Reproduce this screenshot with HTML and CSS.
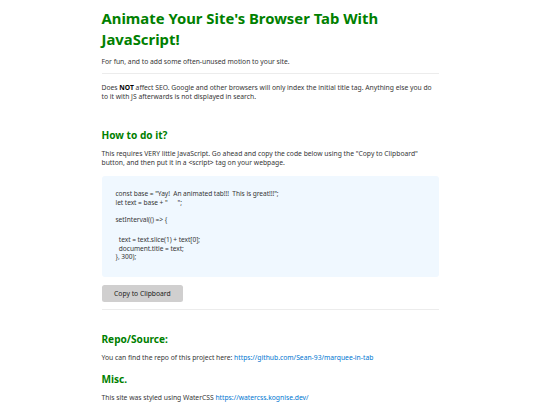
FILE: index.html
```html
<!DOCTYPE html>
<html lang="en">
<head>
<meta charset="utf-8">
<title>Animate Your Site's Browser Tab With JavaScript!</title>
<link rel="stylesheet" href="styles.css">
</head>
<body>
<main class="page">
  <h1 class="title">Animate Your Site's Browser Tab With JavaScript!</h1>
  <p class="text">For fun, and to add some often-unused motion to your site.</p>
  <hr class="rule rule-top">
  <p class="text text-note">Does <strong>NOT</strong> affect SEO. Google and other browsers will only index the initial title tag. Anything else you do to it with JS afterwards is not displayed in search.</p>

  <h2 class="section section-how">How to do it?</h2>
  <p class="text">This requires VERY little JavaScript. Go ahead and copy the code below using the "Copy to Clipboard" button, and then put it in a &lt;script&gt; tag on your webpage.</p>
  <div class="code-box">
    <div class="code-line">const base = "Yay!&nbsp; An animated tab!!!&nbsp; This is great!!!";</div>
    <div class="code-line">let text = base + "&nbsp;&nbsp;&nbsp;&nbsp;&nbsp; ";</div>
    <div class="code-line code-blank">&nbsp;</div>
    <div class="code-line">setInterval(() =&gt; {</div>
    <div class="code-line code-blank code-gap">&nbsp;</div>
    <div class="code-line">&nbsp; text = text.slice(1) + text[0];</div>
    <div class="code-line">&nbsp; document.title = text;</div>
    <div class="code-line">}, 300);</div>
  </div>
  <div class="actions">
    <button class="copy-btn" type="button">Copy to Clipboard</button>
  </div>
  <hr class="rule rule-bottom">

  <h2 class="section section-repo">Repo/Source:</h2>
  <p class="text">You can find the repo of this project here: <a class="link" href="#">https://github.com/Sean-93/marquee-in-tab</a></p>
  <h2 class="section section-misc">Misc.</h2>
  <p class="text">This site was styled using WaterCSS <a class="link" href="#">https://watercss.kognise.dev/</a></p>
</main>
</body>
</html>
```

FILE: styles.css
```css
html, body {
  margin: 0;
  padding: 0;
  background: #ffffff;
}

body {
  font-family: "Noto Sans", "Open Sans", sans-serif;
  color: #363636;
  font-size: 6.75px;
  line-height: 1.4;
}

.page {
  width: 337.5px;
  margin: 0 auto;
  padding: 8.4px 0 0 0.5px;
}

.title {
  margin: 0;
  font-size: 14.85px;
  line-height: 20.8px;
  font-weight: 700;
  color: #008000;
}

.text {
  margin: 6.75px 0;
}

.text strong {
  font-weight: 700;
  color: #000;
}

.rule {
  border: none;
  border-top: 1px solid #ececec;
  height: 0;
  margin: 6.75px 0;
}

.rule-top {
  margin-bottom: 9px;
}

.section {
  margin: 0;
  font-size: 10.1px;
  line-height: 14.2px;
  font-weight: 700;
  color: #008000;
}

.section-how {
  margin-top: 26.3px;
  margin-bottom: 6.75px;
}

.section-repo {
  margin-top: 22px;
  margin-bottom: 6.75px;
}

.section-misc {
  margin-top: 10.1px;
  margin-bottom: 6.75px;
}

.link {
  color: #0076d1;
  text-decoration: none;
}

.code-box {
  margin: 7.7px 0 0;
  padding: 14.6px 14px 14.8px;
  background: #f0f8ff;
  border-radius: 3px;
  font-size: 6.6px;
  line-height: 8.65px;
  letter-spacing: -0.05px;
  color: #363636;
}

.code-line {
  white-space: pre;
}

.code-gap {
  margin-bottom: 2.5px;
}

.actions {
  display: flex;
  margin-top: 8px;
}

.copy-btn {
  font-family: inherit;
  font-size: 6.75px;
  line-height: 9.45px;
  color: #1a1a1a;
  background: #d0cfcf;
  border: none;
  border-radius: 2.5px;
  padding: 3.9px 12.6px;
  margin: 0;
}
```
